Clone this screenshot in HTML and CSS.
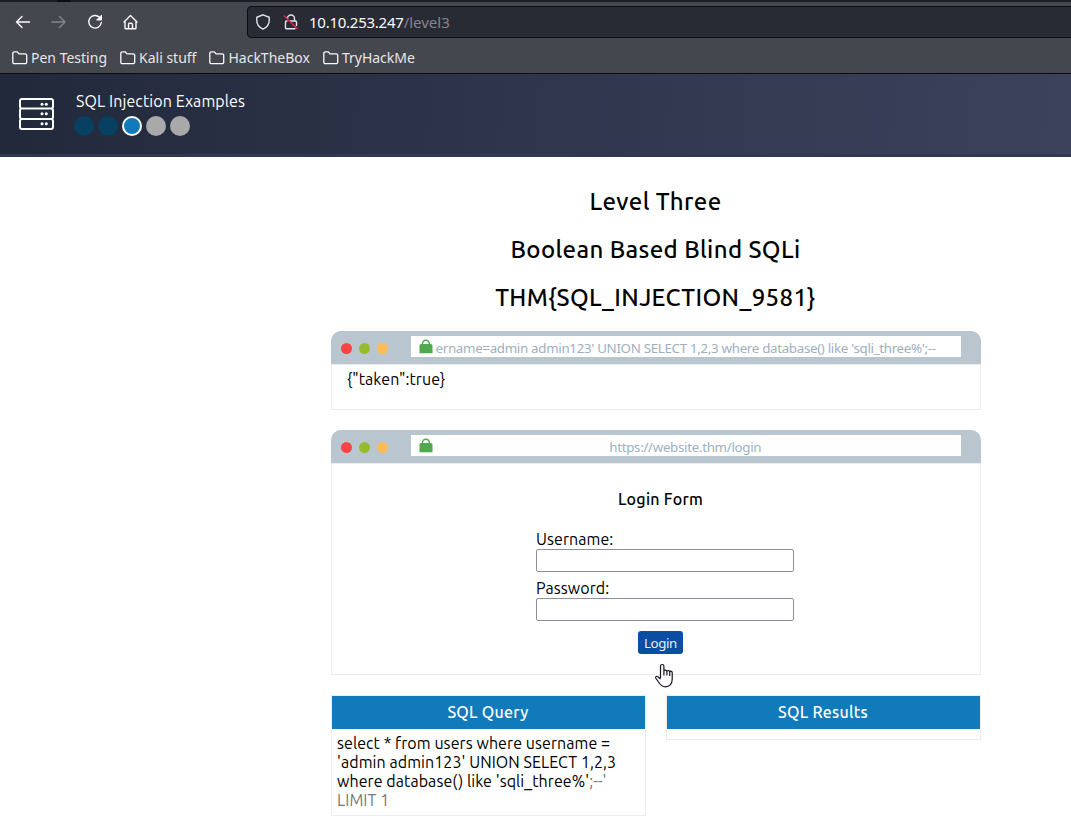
FILE: index.html
```html
<!DOCTYPE html>
<html lang="en">
<head>
<meta charset="utf-8">
<title>SQL Injection Examples</title>
<link rel="stylesheet" href="styles.css">
</head>
<body>
<header class="chrome">
  <div class="tabs-edge"><i class="tab-edge"></i></div>
  <div class="toolbar">
    <svg class="nav back" width="16" height="16" viewBox="0 0 16 16"><path d="M14.500 8H1.500M7 2.500 1.500 8 7 13.500"/></svg>
    <svg class="nav forward" width="16" height="16" viewBox="0 0 16 16"><path d="M1 8h13M8.500 2.500 14 8l-5.500 5.500"/></svg>
    <svg class="nav reload" width="16" height="16" viewBox="0 0 16 16"><path d="M12.500 3.300A6.300 6.300 0 1 0 14.300 8.500"/><path class="solid" d="M14.500 1.500v4.500H10z"/></svg>
    <svg class="nav home" width="16" height="16" viewBox="0 0 16 16"><path d="M1 8l6.500-6.500L14 8M2 7.500v6.500q0 .8.800.800h9.400q.8 0 .8-.8V7.500M5.500 14.500v-4q0-1.200 1.200-1.200h1.600q1.200 0 1.200 1.200v4"/></svg>
    <div class="address">
      <svg class="shield" width="16" height="16" viewBox="0 0 16 16"><path d="M8 .8 14.200 3.300v3.200c0 3.800-2.500 7-6.200 8.700-3.700-1.700-6.200-4.900-6.200-8.700V3.300z"/></svg>
      <svg class="insecure" width="16" height="16" viewBox="0 0 16 16"><path d="M4.500 5V4.500a3.500 3.500 0 0 1 7 0V7M7 7h5.500a1 1 0 0 1 1 1v4M12.500 14.800h-9a1 1 0 0 1-1-1V8a1 1 0 0 1 1-1h1"/><path class="slash" d="M1 1.500 14.500 15"/></svg>
      <span class="url-text"><span class="host">10.10.253.247</span><span class="path">/level3</span></span>
    </div>
  </div>
  <nav class="bookmarks">
    <span class="bookmark"><svg width="16" height="14" viewBox="0 0 16 14"><path d="M.8 2.300A1.500 1.500 0 0 1 2.300.8h3l1.700 2h6.200a1.500 1.500 0 0 1 1.500 1.500v6.900a1.500 1.500 0 0 1-1.500 1.500H2.300a1.500 1.500 0 0 1-1.500-1.500z"/></svg><span>Pen Testing</span></span>
    <span class="bookmark"><svg width="16" height="14" viewBox="0 0 16 14"><path d="M.8 2.300A1.500 1.500 0 0 1 2.300.8h3l1.700 2h6.200a1.500 1.500 0 0 1 1.500 1.500v6.900a1.500 1.500 0 0 1-1.500 1.500H2.300a1.500 1.500 0 0 1-1.500-1.500z"/></svg><span>Kali stuff</span></span>
    <span class="bookmark"><svg width="16" height="14" viewBox="0 0 16 14"><path d="M.8 2.300A1.500 1.500 0 0 1 2.300.8h3l1.700 2h6.200a1.500 1.500 0 0 1 1.500 1.500v6.900a1.500 1.500 0 0 1-1.500 1.500H2.300a1.500 1.500 0 0 1-1.500-1.500z"/></svg><span>HackTheBox</span></span>
    <span class="bookmark"><svg width="16" height="14" viewBox="0 0 16 14"><path d="M.8 2.300A1.500 1.500 0 0 1 2.300.8h3l1.700 2h6.200a1.500 1.500 0 0 1 1.500 1.500v6.900a1.500 1.500 0 0 1-1.500 1.500H2.300a1.500 1.500 0 0 1-1.500-1.500z"/></svg><span>TryHackMe</span></span>
  </nav>
</header>
<section class="banner">
  <svg class="server" width="36" height="34" viewBox="0 0 36 34"><path d="M3 2h29q2 0 2 2v5.500q0 2-2 2H3q-2 0-2-2V4q0-2 2-2zM3 11.500h29q2 0 2 2V20q0 2-2 2H3q-2 0-2-2v-6.500q0-2 2-2zM3 22h29q2 0 2 2v6q0 2-2 2H3q-2 0-2-2V24q0-2 2-2z"/><g class="lights"><circle cx="23" cy="7.300" r="1.500"/><circle cx="27.300" cy="7.300" r="1.500"/><circle cx="23" cy="16.800" r="1.500"/><circle cx="27.300" cy="16.800" r="1.500"/><circle cx="23" cy="26.800" r="1.500"/><circle cx="27.300" cy="26.800" r="1.500"/></g></svg>
  <div class="progress">
    <div class="title">SQL Injection Examples</div>
    <div class="dots"><i class="done"></i><i class="done"></i><i class="current"></i><i></i><i></i></div>
  </div>
</section>
<main class="content">
  <h1>Level Three</h1>
  <h1>Boolean Based Blind SQLi</h1>
  <h1>THM{SQL_INJECTION_9581}</h1>
  <section class="window result">
    <div class="bar">
      <i class="red"></i><i class="green"></i><i class="amber"></i>
      <div class="location"><svg width="14" height="15" viewBox="0 0 14 15"><path class="shackle" d="M3.400 6.500V4.700a3.500 3.500 0 0 1 7 0v1.800"/><path d="M1.500 5h10.800l1.200 1.500v7.800H.5V6.500z"/></svg><div class="field clipped">ername=admin admin123' UNION SELECT 1,2,3 where database() like 'sqli_three%';--</div></div>
    </div>
    <div class="body">{"taken":true}</div>
  </section>
  <section class="window login">
    <div class="bar">
      <i class="red"></i><i class="green"></i><i class="amber"></i>
      <div class="location"><svg width="14" height="15" viewBox="0 0 14 15"><path class="shackle" d="M3.400 6.500V4.700a3.500 3.500 0 0 1 7 0v1.800"/><path d="M1.500 5h10.800l1.200 1.500v7.800H.5V6.500z"/></svg><div class="field">https://website.thm/login</div></div>
    </div>
    <form class="body">
      <h2>Login Form</h2>
      <label for="user">Username:</label>
      <input id="user" type="text">
      <label for="pass">Password:</label>
      <input id="pass" type="password">
      <button type="button">Login</button>
      <svg class="pointer" width="20" height="26" viewBox="0 0 20 26"><path d="M6.500 15V3.200a1.700 1.700 0 0 1 3.400 0V8a1.600 1.600 0 0 1 3 .3 1.500 1.500 0 0 1 2.800.5 1.400 1.400 0 0 1 2.500 1v6.700c0 4-2.500 7.300-6.700 7.300-3.500 0-5.500-2.200-7-4.800L1.700 15c-.6-1.200.7-2 1.700-1.500 1.200.5 2 1.700 3.100 2.500M9.900 8v4.500M12.900 8.500v4M15.700 9v4"/></svg>
    </form>
  </section>
  <div class="panels">
    <section class="panel">
      <h3>SQL Query</h3>
      <div class="query">select * from users where username =<br>'admin admin123' UNION SELECT 1,2,3<br>where database() like 'sqli_three%'<span class="muted">;--'<br>LIMIT 1</span></div>
    </section>
    <section class="panel">
      <h3>SQL Results</h3>
      <div class="empty"></div>
    </section>
  </div>
</main>
</body>
</html>
```
FILE: styles.css
```css
* { box-sizing: border-box; }
body { margin: 0; background: #fff; color: #000; font: 16px/19px Ubuntu, "Noto Sans", sans-serif; letter-spacing: .07px; width: 1071px; height: 825px; overflow: hidden; }
svg { display: block; flex: none; fill: none; overflow: visible; }

.chrome { height: 74px; background: #44474d; color: #e6e6e9; border-bottom: 1px solid #0c0c0d; font-family: "Noto Sans", sans-serif; letter-spacing: 0; }
.tabs-edge { height: 2px; background: #1c1d22; }
.tab-edge { display: block; width: 13px; height: 2px; margin-left: 57px; background: #0c0c12; }
.toolbar { height: 40px; display: flex; align-items: center; padding-left: 15px; gap: 20px; }
.nav { stroke: #fbfbfe; stroke-width: 1.4; stroke-linecap: round; stroke-linejoin: round; }
.forward { stroke: #85868b; }
.nav .solid { fill: #fbfbfe; stroke-width: 1; }
.address { align-self: flex-start; margin: 4px 0 0 88px; width: 840px; height: 32px; display: flex; align-items: center; padding-left: 7px; background: #282a34; border: 1px solid #0c0c12; border-radius: 4px; flex: none; }
.shield, .insecure { stroke: #e4e4ea; stroke-width: 1.4; }
.insecure { margin-left: 12px; }
.slash { stroke: #e22850; stroke-width: 1.6; }
.url-text { margin-left: 10px; font-size: 15px; white-space: nowrap; color: #fbfbfe; }
.host { letter-spacing: -.25px; }
.path { color: #85858c; }
.bookmarks { height: 31px; display: flex; align-items: center; padding-left: 12px; gap: 13px; }
.bookmark { display: flex; align-items: center; gap: 3px; font-size: 14px; line-height: 20px; white-space: nowrap; }
.bookmark svg { stroke: #fbfbfe; stroke-width: 1.3; }

.banner { height: 83px; display: flex; align-items: flex-start; padding: 23px 0 0 19px; background: linear-gradient(95deg, #22293b, #3c425c); border-bottom: 3px solid #303854; }
.server { stroke: #fff; stroke-width: 2; }
.lights { fill: #fff; stroke: none; }
.progress { margin: -5px 0 0 19px; }
.title { height: 19px; padding-left: 2px; color: #fff; letter-spacing: .1px; white-space: nowrap; }
.dots { display: flex; gap: 4px; margin-top: 5px; }
.dots i { width: 20px; height: 20px; border-radius: 50%; background: #a9a9a9; }
.dots .done { background: #074061; }
.dots .current { background: #117abb; border: 2px solid #fff; }

.content { width: 650px; margin: 29px 0 0 331px; }
h1 { margin: 0 0 17px; padding-right: 1px; font-size: 24px; font-weight: 500; line-height: 31px; letter-spacing: .37px; text-align: center; white-space: nowrap; }
.window { border: 1px solid #ebebeb; border-top: 0; border-radius: 10px 10px 0 0; margin-bottom: 20px; }
.result { margin-top: 18px; }
.bar { display: flex; align-items: center; height: 33px; margin: 0 -1px; padding: 0 20px 0 10px; background: #bac6cf; border-radius: 10px 10px 0 0; }
.bar i { width: 11px; height: 11px; border-radius: 50%; margin-right: 7px; margin-top: 2px; flex: none; }
.red { background: #ff4343; }
.green { background: #98ba2f; }
.amber { background: #ffbb55; }
.location { display: flex; width: 550px; height: 21px; margin: -3px 0 0 16px; padding-left: 8px; background: #fff; }
.location svg { fill: #50a84f; margin-top: 3px; margin-left: -.5px; }
.shackle { fill: none; stroke: #50a84f; stroke-width: 1.5; }
.field { flex: 1; margin-right: 23px; text-align: center; color: #9eb0c0; font: 13.33px/25px "Noto Sans", sans-serif; letter-spacing: -.31px; white-space: nowrap; }
.clipped { margin-left: 3px; margin-right: 0; text-align: left; }
.result .body { height: 45px; padding: 5px 15px; border-top: 1px solid #ebebeb; }
.login .body { position: relative; height: 211px; border-top: 1px solid #ebebeb; padding: 26px 0 0 204px; }
h2 { margin: 0 0 21px; width: 249px; font-size: 16px; line-height: 19px; font-weight: 500; letter-spacing: .27px; text-align: center; }
label { display: block; height: 19px; }
input { display: block; width: 258px; height: 23px; margin: 0 0 7px; padding: 0; border: 1px solid #8f8f9d; border-radius: 2px; background: #fff; }
button { display: block; width: 45px; height: 23px; margin: 10px 0 0 102px; padding: 0; border: 0; border-radius: 3px; background: #0b4da2; color: #e8eef6; font: 13.33px/25px "Noto Sans", sans-serif; letter-spacing: -.4px; }
.pointer { position: absolute; left: 322px; top: 199px; stroke: #151525; stroke-width: 1.2; fill: #fff; }
.panels { display: flex; align-items: flex-start; justify-content: space-between; }
.panel { width: 315px; border: 1px solid #ebebeb; }
h3 { margin: 0; padding-right: 1px; height: 33px; background: #117abb; color: #fff; font-size: 16px; font-weight: 500; line-height: 32px; letter-spacing: .27px; text-align: center; }
.query { height: 86px; padding: 5px; white-space: nowrap; }
.empty { height: 10px; }
.muted { color: #777; }
```
